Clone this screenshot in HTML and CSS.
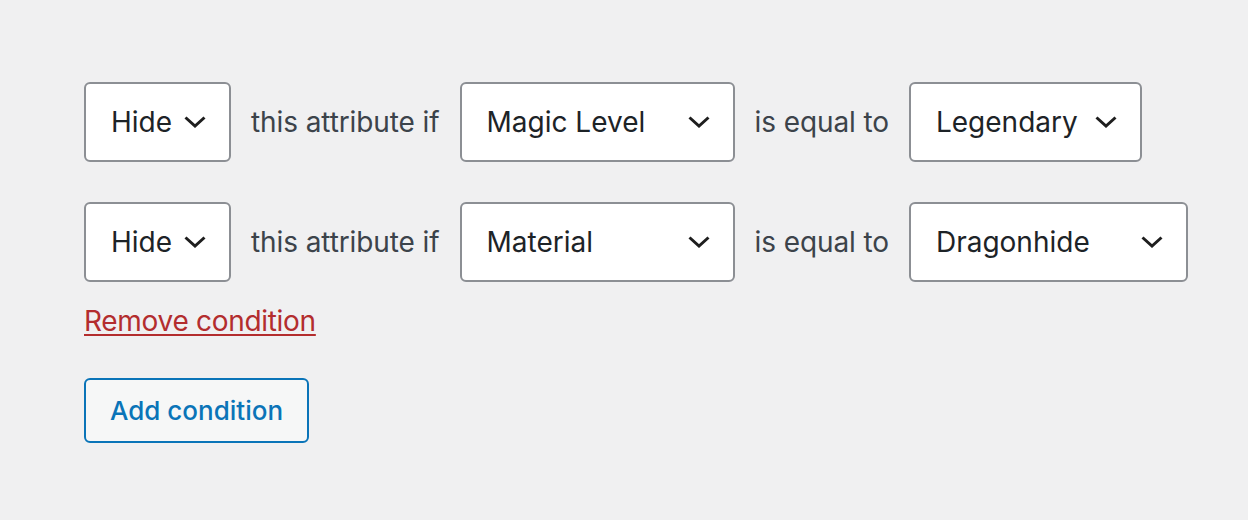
FILE: index.html
```html
<!DOCTYPE html>
<html lang="en">

<head>
  <meta charset="UTF-8">
  <meta name="viewport" content="width=device-width, initial-scale=1.0">
  <title>Conditions</title>
  <link rel="stylesheet" href="styles.css">
</head>

<body>
  <div class="condiciones">
    <!-- Condicion 1 -->
    <div class="fila">
      <div class="select select-accion">
        <span>Hide</span>
        <svg class="chevron" viewBox="0 0 22 12"><path d="M1.5 1.5l9.5 8.5 9.5-8.5" /></svg>
      </div>
      <span class="etiqueta">this attribute if</span>
      <div class="select select-campo">
        <span>Magic Level</span>
        <svg class="chevron" viewBox="0 0 22 12"><path d="M1.5 1.5l9.5 8.5 9.5-8.5" /></svg>
      </div>
      <span class="etiqueta">is equal to</span>
      <div class="select select-valor">
        <span>Legendary</span>
        <svg class="chevron" viewBox="0 0 22 12"><path d="M1.5 1.5l9.5 8.5 9.5-8.5" /></svg>
      </div>
    </div>

    <!-- Condicion 2 -->
    <div class="fila">
      <div class="select select-accion">
        <span>Hide</span>
        <svg class="chevron" viewBox="0 0 22 12"><path d="M1.5 1.5l9.5 8.5 9.5-8.5" /></svg>
      </div>
      <span class="etiqueta">this attribute if</span>
      <div class="select select-campo">
        <span>Material</span>
        <svg class="chevron" viewBox="0 0 22 12"><path d="M1.5 1.5l9.5 8.5 9.5-8.5" /></svg>
      </div>
      <span class="etiqueta">is equal to</span>
      <div class="select select-valor-largo">
        <span>Dragonhide</span>
        <svg class="chevron" viewBox="0 0 22 12"><path d="M1.5 1.5l9.5 8.5 9.5-8.5" /></svg>
      </div>
    </div>

    <a href="#" class="quitar">Remove condition</a>

    <div>
      <button class="boton-agregar">Add condition</button>
    </div>
  </div>
</body>

</html>
```

FILE: styles.css
```css
body {
  margin: 0;
  background: #f0f0f1;
  font-family: Inter, "Noto Sans", sans-serif;
  font-size: 28px;
  color: #3c434a;
}

.condiciones {
  padding: 82px 0 0 84px;
}

.fila {
  display: flex;
  align-items: center;
  gap: 20px;
  margin-bottom: 40px;
}

.fila+.fila {
  margin-bottom: 22px;
}

.select {
  box-sizing: border-box;
  height: 80px;
  display: flex;
  align-items: center;
  justify-content: space-between;
  padding: 0 23px 0 25px;
  background: #fff;
  border: 2px solid #8c8f94;
  border-radius: 6px;
  color: #1d2327;
}

.select-accion {
  width: 147px;
}

.select-campo {
  width: 275px;
}

.select-valor {
  width: 233px;
}

.select-valor-largo {
  width: 279px;
}

.chevron {
  width: 22px;
  height: 12px;
  fill: none;
  stroke: #1e1e1e;
  stroke-width: 3;
}

.etiqueta {
  white-space: nowrap;
  letter-spacing: -0.1px;
}

.quitar {
  display: inline-block;
  color: #b32d2e;
  text-decoration: underline;
  text-underline-offset: 3px;
  text-decoration-thickness: 2px;
  letter-spacing: -0.3px;
  margin-bottom: 40px;
}

.boton-agregar {
  box-sizing: border-box;
  height: 65px;
  padding: 0 24px;
  font-family: inherit;
  font-size: 26px;
  font-weight: 500;
  color: #0a74b8;
  background: #f6f7f7;
  border: 2px solid #0a74b8;
  border-radius: 6px;
  cursor: pointer;
}
```
